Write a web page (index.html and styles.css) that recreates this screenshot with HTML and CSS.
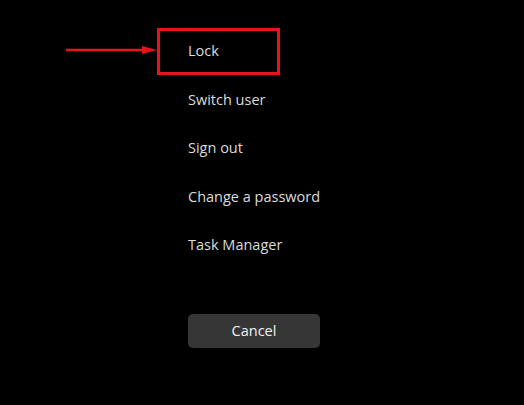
FILE: index.html
```html
<!DOCTYPE html>
<html lang="en">
<head>
<meta charset="UTF-8">
<meta name="viewport" content="width=device-width, initial-scale=1.0">
<title>Security options</title>
<link rel="stylesheet" href="styles.css">
</head>
<body>
<div class="screen">
  <ul class="menu">
    <li class="item lock">
      Lock
      <span class="mark"></span>
      <svg class="arrow" width="92" height="10" viewBox="0 0 92 10">
        <line x1="0" y1="5" x2="78" y2="5" stroke="#e8141b" stroke-width="2.5"/>
        <polygon points="76,1 91,5 76,9" fill="#e8141b"/>
      </svg>
    </li>
    <li class="item">Switch user</li>
    <li class="item">Sign out</li>
    <li class="item">Change a password</li>
    <li class="item">Task Manager</li>
  </ul>
  <button class="cancel">Cancel</button>
</div>
</body>
</html>
```

FILE: styles.css
```css
*{box-sizing:border-box;margin:0;padding:0}
html,body{background:#000;height:100%}
body{font-family:"Open Sans","Noto Sans",sans-serif;color:#dcdcdc;overflow:hidden}
.screen{padding:27px 0 0 188px;display:flex;flex-direction:column;align-items:flex-start}
.menu{list-style:none}
.item{height:48.5px;line-height:48.5px;font-size:14.5px;position:relative}
.mark{position:absolute;left:-31px;top:1px;width:123px;height:47px;border:3px solid #e8141b}
.arrow{position:absolute;left:-122px;top:18px}
.cancel{margin-top:44px;width:132px;height:34px;background:#363636;color:#f2f2f2;border:none;border-radius:5px;font-family:inherit;font-size:14.5px}
```
